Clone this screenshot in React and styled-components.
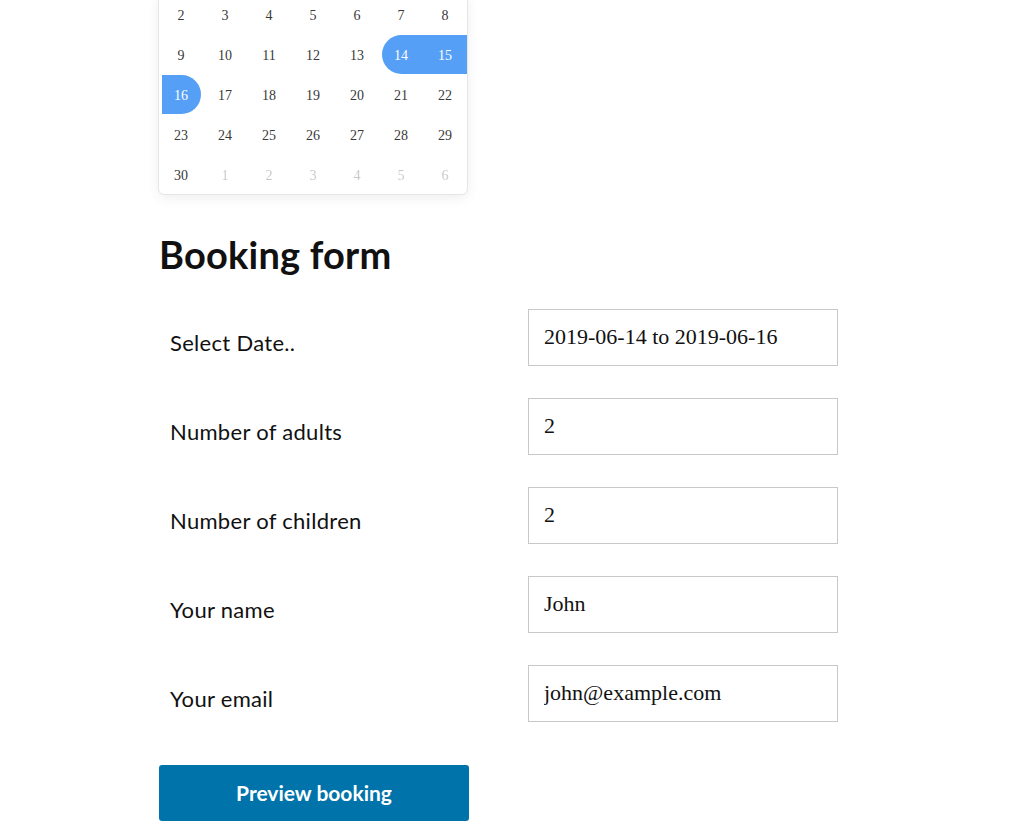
import React from "react";
import styled, { createGlobalStyle } from "styled-components";

const GlobalStyle = createGlobalStyle`
  html, body {
    margin: 0;
    padding: 0;
    background: #fff;
  }
  body {
    font-family: "Lato", "Liberation Sans", sans-serif;
    color: #111;
  }
`;

const weeks = [
  [2, 3, 4, 5, 6, 7, 8],
  [9, 10, 11, 12, 13, 14, 15],
  [16, 17, 18, 19, 20, 21, 22],
  [23, 24, 25, 26, 27, 28, 29],
  [30, 1, 2, 3, 4, 5, 6],
];

const rangeStart = 14;
const rangeEnd = 16;

const fields = [
  { id: "date", label: "Select Date..", value: "2019-06-14 to 2019-06-16" },
  { id: "adults", label: "Number of adults", value: "2" },
  { id: "children", label: "Number of children", value: "2" },
  { id: "name", label: "Your name", value: "John" },
  { id: "email", label: "Your email", value: "john@example.com" },
];

export default function App() {
  return (
    <>
      <GlobalStyle />
      <Page>
        <Calendar>
          {weeks.map((week, w) => (
            <Week key={w}>
              {week.map((day, i) => {
                const nextMonth = w === weeks.length - 1 && i > 0;
                const selected = !nextMonth && day >= rangeStart && day <= rangeEnd;
                let shape = "none";
                if (selected && day === rangeStart) shape = "start";
                else if (selected && day === rangeEnd) shape = "end";
                else if (selected) shape = "middle";
                return (
                  <Day key={i} $muted={nextMonth} $shape={shape}>
                    {day}
                  </Day>
                );
              })}
            </Week>
          ))}
        </Calendar>

        <Title>Booking form</Title>

        <Form onSubmit={(e) => e.preventDefault()}>
          {fields.map((f) => (
            <Row key={f.id}>
              <Label htmlFor={f.id}>{f.label}</Label>
              <Field id={f.id} defaultValue={f.value} />
            </Row>
          ))}
          <SubmitButton type="submit">Preview booking</SubmitButton>
        </Form>
      </Page>
    </>
  );
}

const Page = styled.main`
  width: 679px;
  padding-left: 159px;
  padding-bottom: 40px;
`;

const Calendar = styled.div`
  width: 308px;
  margin-top: -5px;
  background: #fff;
  border-radius: 0 0 5px 5px;
  box-shadow: 1px 0 0 #e6e6e6, -1px 0 0 #e6e6e6, 0 1px 0 #e6e6e6,
    0 3px 13px rgba(0, 0, 0, 0.08);
  overflow: hidden;
`;

const Week = styled.div`
  display: flex;
  justify-content: space-around;
  height: 40px;
  align-items: flex-start;
  &:last-child {
    height: 39px;
  }
`;

const Day = styled.span`
  width: 39px;
  height: 39px;
  line-height: 41px;
  text-align: center;
  font-family: "Liberation Serif", "Times New Roman", serif;
  font-size: 14px;
  color: ${(p) => (p.$muted ? "rgba(57, 57, 57, 0.3)" : "#393939")};
  ${(p) =>
    p.$shape !== "none" &&
    `
    background: #569ff7;
    color: #fff;
  `}
  ${(p) => p.$shape === "start" && `border-radius: 50px 0 0 50px; box-shadow: 5px 0 0 #569ff7;`}
  ${(p) => p.$shape === "middle" && `box-shadow: -5px 0 0 #569ff7, 8px 0 0 #569ff7;`}
  ${(p) => p.$shape === "end" && `border-radius: 0 50px 50px 0;`}
`;

const Title = styled.h1`
  margin: 38px 0 0 0;
  font-size: 38px;
  line-height: 44px;
  font-weight: 700;
  color: #111;
  letter-spacing: 0.2px;
`;

const Form = styled.form`
  margin-top: 33px;
  display: flex;
  flex-direction: column;
  gap: 32px;
`;

const Row = styled.div`
  display: grid;
  grid-template-columns: 369px 310px;
  align-items: center;
`;

const Label = styled.label`
  padding: 10px 0 0 11px;
  font-size: 22px;
  letter-spacing: 0.3px;
  color: #111;
`;

const Field = styled.input`
  box-sizing: border-box;
  width: 310px;
  height: 57px;
  padding: 0 15px 2px;
  border: 1px solid #c8c8c8;
  border-radius: 0;
  background: #fff;
  font-family: "Liberation Serif", "Times New Roman", serif;
  font-size: 22px;
  color: #111;
  outline: none;
`;

const SubmitButton = styled.button`
  box-sizing: border-box;
  width: 310px;
  height: 56px;
  margin-top: 11px;
  padding-bottom: 2px;
  border: none;
  border-radius: 3px;
  background: #0073aa;
  color: #fff;
  font-family: "Lato", "Liberation Sans", sans-serif;
  font-size: 21px;
  font-weight: 700;
  cursor: pointer;
`;
